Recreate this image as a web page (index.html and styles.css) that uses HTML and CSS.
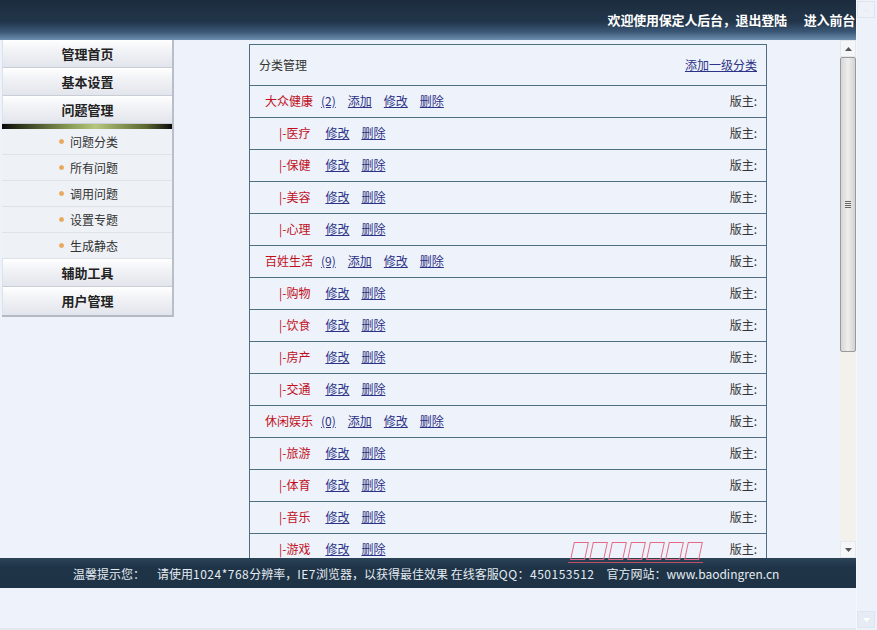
FILE: index.html
```html
<!DOCTYPE html>
<html lang="zh-CN">
<head>
<meta charset="utf-8">
<title>保定人后台</title>
<link rel="stylesheet" href="styles.css">
</head>
<body>
<div class="page">
  <div class="main">
    <div class="top">
      <span class="welcome">欢迎使用保定人后台，退出登陆</span>
      <span class="front">进入前台</span>
    </div>
    <div class="middle">
      <div class="menu">
        <div class="mhead">管理首页</div>
        <div class="mhead">基本设置</div>
        <div class="mhead">问题管理</div>
        <div class="mbar"></div>
        <div class="mitem"><i class="dot"></i>问题分类</div>
        <div class="mitem"><i class="dot"></i>所有问题</div>
        <div class="mitem"><i class="dot"></i>调用问题</div>
        <div class="mitem"><i class="dot"></i>设置专题</div>
        <div class="mitem"><i class="dot"></i>生成静态</div>
        <div class="mhead">辅助工具</div>
        <div class="mhead last">用户管理</div>
      </div>
      <div class="frame">
        <div class="content">
          <div class="tbl">
            <div class="row head"><span class="title">分类管理</span><a class="lk">添加一级分类</a></div>
            <div class="row"><span class="l"><span class="cat">大众健康</span><a class="lk">(2)</a><a class="lk">添加</a><a class="lk">修改</a><a class="lk">删除</a></span><span class="mod">版主:</span></div>
            <div class="row"><span class="l sub"><span class="cat">|-医疗</span><a class="lk">修改</a><a class="lk">删除</a></span><span class="mod">版主:</span></div>
            <div class="row"><span class="l sub"><span class="cat">|-保健</span><a class="lk">修改</a><a class="lk">删除</a></span><span class="mod">版主:</span></div>
            <div class="row"><span class="l sub"><span class="cat">|-美容</span><a class="lk">修改</a><a class="lk">删除</a></span><span class="mod">版主:</span></div>
            <div class="row"><span class="l sub"><span class="cat">|-心理</span><a class="lk">修改</a><a class="lk">删除</a></span><span class="mod">版主:</span></div>
            <div class="row"><span class="l"><span class="cat">百姓生活</span><a class="lk">(9)</a><a class="lk">添加</a><a class="lk">修改</a><a class="lk">删除</a></span><span class="mod">版主:</span></div>
            <div class="row"><span class="l sub"><span class="cat">|-购物</span><a class="lk">修改</a><a class="lk">删除</a></span><span class="mod">版主:</span></div>
            <div class="row"><span class="l sub"><span class="cat">|-饮食</span><a class="lk">修改</a><a class="lk">删除</a></span><span class="mod">版主:</span></div>
            <div class="row"><span class="l sub"><span class="cat">|-房产</span><a class="lk">修改</a><a class="lk">删除</a></span><span class="mod">版主:</span></div>
            <div class="row"><span class="l sub"><span class="cat">|-交通</span><a class="lk">修改</a><a class="lk">删除</a></span><span class="mod">版主:</span></div>
            <div class="row"><span class="l"><span class="cat">休闲娱乐</span><a class="lk">(0)</a><a class="lk">添加</a><a class="lk">修改</a><a class="lk">删除</a></span><span class="mod">版主:</span></div>
            <div class="row"><span class="l sub"><span class="cat">|-旅游</span><a class="lk">修改</a><a class="lk">删除</a></span><span class="mod">版主:</span></div>
            <div class="row"><span class="l sub"><span class="cat">|-体育</span><a class="lk">修改</a><a class="lk">删除</a></span><span class="mod">版主:</span></div>
            <div class="row"><span class="l sub"><span class="cat">|-音乐</span><a class="lk">修改</a><a class="lk">删除</a></span><span class="mod">版主:</span></div>
            <div class="row"><span class="l sub"><span class="cat">|-游戏</span><a class="lk">修改</a><a class="lk">删除</a></span><span class="mod">版主:</span></div>
          </div>
        </div>
        <div class="tofu"><i></i><i></i><i></i><i></i><i></i><i></i><i></i></div>
        <div class="vscroll">
          <div class="sbtn up"><svg width="7" height="4" viewBox="0 0 7 4"><path d="M0 4 L3.5 0 L7 4Z" fill="#555"/></svg></div>
          <div class="thumb"><span class="grip"></span></div>
          <div class="track"></div>
          <div class="sbtn down"><svg width="7" height="4" viewBox="0 0 7 4"><path d="M0 0 L3.5 4 L7 0Z" fill="#555"/></svg></div>
        </div>
      </div>
    </div>
    <div class="foot">
      <span class="tip">温馨提示您：</span><span>请使用<span class="lat">1024*768</span>分辨率，<span class="lat">IE7</span>浏览器，以获得最佳效果 在线客服<span class="lat">QQ：450153512</span></span><span class="site">官方网站：www.baodingren.cn</span>
    </div>
    <div class="rest"></div>
  </div>
  <div class="oscroll">
    <div class="obtn"><svg width="7" height="4" viewBox="0 0 7 4"><path d="M0 4 L3.5 0 L7 4Z" fill="#e8eef6"/></svg></div>
    <div class="otrack"></div>
    <div class="obtn"><svg width="7" height="4" viewBox="0 0 7 4"><path d="M0 0 L3.5 4 L7 0Z" fill="#fff"/></svg></div>
  </div>
</div>
</body>
</html>
```
FILE: styles.css
```css
html, body {
  margin: 0;
  padding: 0;
}
body {
  width: 877px;
  height: 630px;
  overflow: hidden;
  background: #eef2fa;
  font-family: "Noto Sans CJK SC", "Noto Sans", sans-serif;
  font-size: 12px;
  color: #333;
}
.page {
  display: flex;
  width: 877px;
  height: 630px;
}
.main {
  width: 857px;
  display: flex;
  flex-direction: column;
}
.top {
  height: 40px;
  box-sizing: border-box;
  background: linear-gradient(#1c2b3d 0%, #22364b 55%, #3b5877 80%, #6e8fb0 100%);
  display: flex;
  justify-content: flex-end;
  align-items: center;
  padding: 0 1px 2px 0;
  color: #fff;
  font-weight: bold;
  font-size: 13px;
  letter-spacing: -0.2px;
}
.top .front {
  margin-left: 17px;
}
.middle {
  height: 518px;
  display: flex;
}
.menu {
  width: 170px;
  margin-left: 2px;
  align-self: flex-start;
  border-right: 2px solid #b9bec8;
  border-bottom: 2px solid #b4b9c3;
}
.mhead {
  height: 28px;
  line-height: 28px;
  text-align: center;
  font-weight: bold;
  font-size: 13px;
  color: #222;
  background: linear-gradient(#ffffff 0%, #f3f4f7 35%, #e2e5ec 100%);
  border-bottom: 1px solid #c9cdd6;
  box-sizing: border-box;
  border-left: 1px solid #dde1e8;
}
.mhead.last {
  border-bottom: none;
}
.mbar {
  height: 5px;
  background: linear-gradient(90deg, #0a0a0a 0%, #2b331a 10%, #8a9c56 40%, #b5c77c 55%, #5a6630 85%, #0a0a0a 100%);
}
.mitem {
  height: 26px;
  box-sizing: border-box;
  border-bottom: 1px solid #dfe2e8;
  background: #eef1f6;
  padding-left: 57px;
  color: #333;
  display: flex;
  align-items: center;
}
.dot {
  display: inline-block;
  width: 5px;
  height: 5px;
  border-radius: 50%;
  background: radial-gradient(circle, #f0a040 0%, #e8b070 60%, #f3d6b0 100%);
  margin-right: 6px;
}
.frame {
  flex: 1;
  display: flex;
  position: relative;
}
.content {
  flex: 1;
  overflow: hidden;
  padding: 4px 0 0 75px;
}
.tbl {
  width: 518px;
  border: 1px solid #4f6f82;
  border-bottom: none;
  box-sizing: border-box;
  background: #eef2fa;
}
.row {
  height: 32px;
  border-bottom: 1px solid #4f6f82;
  box-sizing: border-box;
  display: flex;
  align-items: center;
  justify-content: space-between;
  padding: 0 9px 2px 15px;
}
.row.head {
  height: 41px;
  padding-left: 9px;
}
.title {
  color: #333;
}
.l {
  display: flex;
  align-items: center;
}
.l.sub {
  padding-left: 14px;
}
.cat {
  color: #c0101c;
  margin-right: 8px;
}
.sub .cat {
  margin-right: 15px;
}
.lk {
  color: #2d3388;
  text-decoration: underline;
  margin-right: 12px;
  cursor: pointer;
}
.row.head .lk {
  margin-right: 0;
}
.mod {
  color: #333;
}
.tofu {
  position: absolute;
  z-index: 5;
  left: 394px;
  top: 502px;
  display: flex;
  gap: 4px;
  border-bottom: 1px solid #c0506a;
  padding: 0 2px 2px 4px;
}
.tofu i {
  display: block;
  width: 15px;
  height: 18px;
  box-sizing: border-box;
  border: 1px solid #e56a86;
  transform: skewX(-12deg);
}
.vscroll {
  width: 16px;
  display: flex;
  flex-direction: column;
  background: #f3f3f0;
}
.sbtn {
  height: 17px;
  display: flex;
  align-items: center;
  justify-content: center;
  background: #f4f6f8;
  border: 1px solid #e4e8ee;
  box-sizing: border-box;
}
.thumb {
  height: 295px;
  box-sizing: border-box;
  border: 1px solid #9a9a9a;
  border-radius: 2px;
  background: linear-gradient(90deg, #d6d6d6, #eeeeee 50%, #d2d2d2);
  display: flex;
  align-items: center;
  justify-content: center;
}
.grip {
  width: 6px;
  height: 7px;
  background: repeating-linear-gradient(#666 0 1px, transparent 1px 2px);
}
.track {
  flex: 1;
  background: #f2f1ec;
}
.foot {
  height: 30px;
  background: linear-gradient(#2b4358 0%, #1f3447 30%, #1e3345 100%);
  color: #e4ebf2;
  display: flex;
  align-items: center;
  padding-left: 73px;
  white-space: nowrap;
}
.lat {
  letter-spacing: 0.5px;
}
.tip {
  margin-right: 12px;
}
.site {
  margin-left: 12px;
}
.rest {
  flex: 1;
  background: #eef2fa;
  border-bottom: 2px solid #e4e8ee;
}
.oscroll {
  width: 20px;
  display: flex;
  flex-direction: column;
  background: #edf2fa;
  border-left: 1px solid #f6f8fc;
}
.obtn {
  width: 18px;
  height: 17px;
  margin-top: 1px;
  display: flex;
  align-items: center;
  justify-content: center;
  background: #eef2f8;
  border: 1px solid #dfe5ee;
  box-sizing: border-box;
}
.otrack {
  flex: 1;
}
.oscroll .obtn:last-child {
  margin: 0 0 2px 0;
  background: #e6ecf5;
}
```
